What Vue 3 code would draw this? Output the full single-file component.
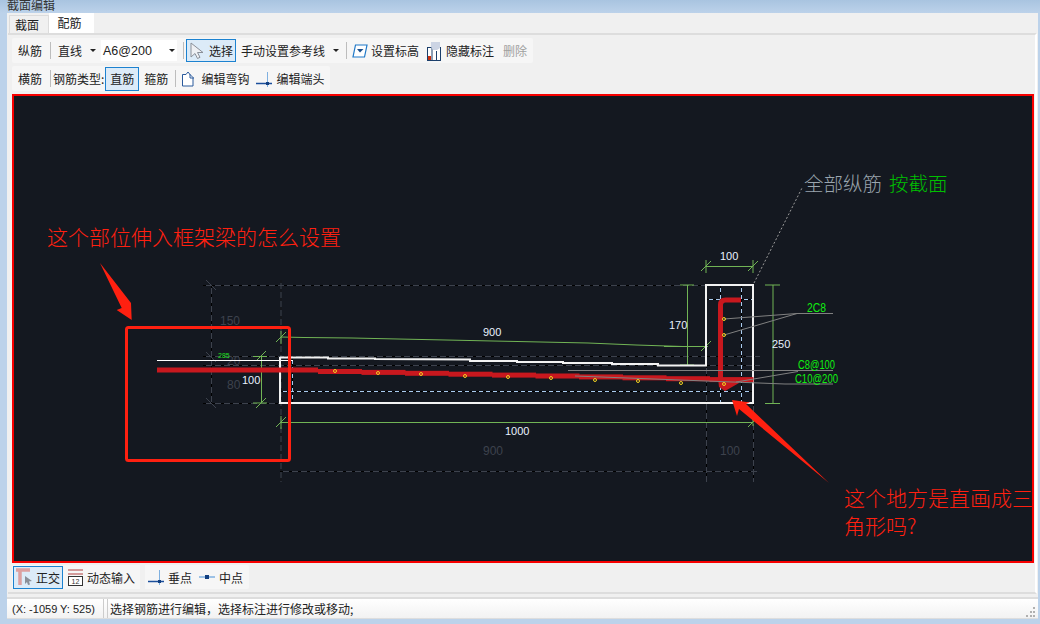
<template>
  <div class="page">
    <div class="title">截面编辑</div>
    <div class="win">
      <div class="tabs">
        <div class="tab">截面</div>
        <div class="tab active">配筋</div>
      </div>

      <div class="panel">
        <!-- first toolbar -->
        <div class="bar">
          <span>纵筋</span>
          <i class="sep ml8"></i>
          <span class="ml7">直线</span>
          <i class="caret ml8"></i>
          <div class="combo ml5"><span>A6@200</span><i class="caret"></i></div>
          <i class="sep ml6"></i>
          <div class="btn ml2 w50">
            <svg width="16" height="18" viewBox="0 0 16 18"><path d="M2 1v14l4-3.500 2.500 5 2.500-1.200-2.500-4.800H14z" fill="#eef0f4" stroke="#8a8f98"/></svg>
            <span class="ml4">选择</span>
          </div>
          <span class="ml5">手动设置参考线</span>
          <i class="caret ml8"></i>
          <i class="sep ml7"></i>
          <svg class="ml5" width="16" height="14" viewBox="0 0 16 14"><path d="M3.500 1H15l-2.500 12H1z" fill="#fff" stroke="#1e78c8" stroke-width="1.200"/><path d="M5 5h6.500L8 8.500z" fill="#1a4f8c"/></svg>
          <span class="ml3">设置标高</span>
          <svg class="ml8" width="14" height="20" viewBox="0 0 14 20"><rect x="0.500" y="6.500" width="13" height="13" fill="#fff" stroke="#1b3f6b"/><path d="M5 7v12M9.500 10v9" stroke="#1b3f6b"/><rect x="1" y="15" width="3" height="4" fill="#c83010"/><path d="M4 1h9v6l-3 2H6L4 6z" fill="#ccd4e4"/></svg>
          <span class="ml5">隐藏标注</span>
          <span class="ml9 off">删除</span>
        </div>

        <!-- second toolbar -->
        <div class="bar">
          <span>横筋</span>
          <i class="sep ml8"></i>
          <span class="ml2">钢筋类型:</span>
          <div class="btn ml1 w34"><span>直筋</span></div>
          <span class="ml5">箍筋</span>
          <i class="sep ml7"></i>
          <svg class="ml5" width="16" height="16" viewBox="0 0 16 16"><path d="M1.500 15V3.500h3.500l2-2.500 2 2.500 3 3V15z" fill="#fff" stroke="#2a5a9c"/><path d="M9 3v4h4" fill="none" stroke="#2a5a9c"/></svg>
          <span class="ml4">编辑弯钩</span>
          <svg class="ml7" width="16" height="16" viewBox="0 0 16 16"><path d="M0 12.500h16" stroke="#1b4f9c" stroke-width="1.500"/><path d="M11.500 1v15" stroke="#7fb0e0"/><rect x="10" y="11" width="3" height="3" fill="#123f80"/></svg>
          <span class="ml4">编辑端头</span>
        </div>

        <!-- drawing -->
        <div class="canvas">
          <svg width="1018" height="465" viewBox="14 96 1018 465">
            <g v-for="(l, i) in dimLines" :key="'d' + i">
              <line :x1="l[0]" :y1="l[1]" :x2="l[2]" :y2="l[3]" stroke="#3d424d" />
              <line :x1="l[0]" :y1="l[1]" :x2="l[2]" :y2="l[3]" stroke="#000" stroke-dasharray="3 6" />
            </g>
            <g v-for="(t, i) in dimTicks" :key="'k' + i">
              <line :x1="t[0] - 5" :y1="t[1] - 5" :x2="t[0] + 5" :y2="t[1] + 5" stroke="#3d424d" />
            </g>
            <text v-for="t in dimTexts" :key="t[0] + '-' + t[1]" :x="t[0]" :y="t[1]" class="dim-text">{{ t[2] }}</text>

            <g v-for="(l, i) in blueLines" :key="'b' + i">
              <line :x1="l[0]" :y1="l[1]" :x2="l[2]" :y2="l[3]" stroke="#a9cbee" />
              <line :x1="l[0]" :y1="l[1]" :x2="l[2]" :y2="l[3]" stroke="#000" stroke-dasharray="3 4" />
            </g>

            <polyline :points="greenTop" fill="none" stroke="#71b455" />
            <g stroke="#71b455" fill="none">
              <path d="M261.500 356.500V403M253 356.500h14M253 403h14" />
              <path d="M281 422.500H753" />
              <path d="M706 266.500H753M706 260v13M753 260v13" />
              <path d="M687.500 285V365M680 285h14M680 365h14M664 346.500h44" />
              <path d="M773 285V403M765 285h15M765 403.500h15" />
              <path d="M281 331v13M706 340v12M281 416v13M753 416v10" />
              <path v-for="(t, i) in greenTicks" :key="'g' + i" :d="`M${t[0] - 5} ${t[1] + 5}L${t[0] + 5} ${t[1] - 5}`" />
            </g>

            <line x1="157" y1="360.500" x2="293" y2="360.500" stroke="#fff" />
            <polyline :points="section" fill="none" stroke="#f2f2f2" stroke-width="2" />

            <!-- rebar -->
            <rect x="157" y="367.500" width="161" height="5" fill="#c8181e" />
            <rect v-for="r in rebarSteps" :key="r.x" :x="r.x" :y="r.y" width="44" height="5" fill="#c8181e" />
            <path d="M720.500 379V305q0-5 5-5H741" fill="none" stroke="#c8181e" stroke-width="5" />
            <path d="M718 378H739V383L725 391 719 387z" fill="#c8181e" />

            <g fill="none" stroke="#808080">
              <path d="M724 319 797 313.500H833M724 335 797 313.500" />
              <path d="M568 370.500H833M736 382 798 371.500" />
              <path d="M575 376 785 384H833" />
            </g>
            <circle v-for="c in dots" :key="c[0] + '_' + c[1]" :cx="c[0]" :cy="c[1]" r="1.500" fill="none" stroke="#f0d020" />

            <text v-for="t in whiteTexts" :key="t[2] + t[0]" :x="t[0]" :y="t[1]" class="num">{{ t[2] }}</text>
            <text x="218" y="358" class="tiny">285</text>
            <text x="807" y="312" class="label" textLength="19" lengthAdjust="spacingAndGlyphs">2C8</text>
            <text x="798" y="369" class="label" textLength="37" lengthAdjust="spacingAndGlyphs">C8@100</text>
            <text x="795" y="383" class="label" textLength="43" lengthAdjust="spacingAndGlyphs">C10@200</text>

            <line x1="754" y1="283" x2="802" y2="188" stroke="#9a9a9a" stroke-dasharray="2 2" />
            <text x="804" y="191" class="note grey">全部纵筋</text>
            <text x="889" y="191" class="note green">按截面</text>

            <!-- hand drawn marks -->
            <rect x="126.500" y="327.500" width="163" height="133" rx="2" fill="none" stroke="#ff2010" stroke-width="3" />
            <path d="M100 263 131 303 131.700 320 116.700 310 121.700 308z" fill="#ff2010" />
            <path d="M732 400 750 402.500 746 404 829 483 739 409 737 416z" fill="#ff2010" />
            <text x="47" y="245" class="ask">这个部位伸入框架梁的怎么设置</text>
            <text x="844" y="506" class="ask">这个地方是直画成三</text>
            <text x="844" y="534" class="ask">角形吗?</text>
          </svg>
        </div>

        <!-- snap toolbar -->
        <div class="bar snap">
          <div class="btn w50 snap-btn">
            <svg width="18" height="18" viewBox="0 0 18 18"><path d="M0 2h14M4 2v15" stroke="#dca0a0" stroke-width="3.500"/><path d="M9 8l7 5-3 .5 1 3-2 .5-1-3-2 2z" fill="#8a8f98"/></svg>
            <span class="ml2">正交</span>
          </div>
          <svg class="ml4" width="17" height="18" viewBox="0 0 17 18"><path d="M1 2h15M1 6h15" stroke="#b04040"/><rect x="1.500" y="8.500" width="14" height="9" fill="#fff" stroke="#333"/><text x="4.500" y="16" class="icon-num">12</text></svg>
          <span class="ml3">动态输入</span>
          <i class="gap"></i>
          <svg class="ml3" width="16" height="16" viewBox="0 0 16 16"><path d="M0 12.500h16" stroke="#1b4f9c" stroke-width="1.500"/><path d="M11.500 1v15" stroke="#7fb0e0"/><rect x="10" y="11" width="3" height="3" fill="#123f80"/></svg>
          <span class="ml4">垂点</span>
          <svg class="ml7" width="16" height="6" viewBox="0 0 16 6"><path d="M0 3h16" stroke="#7fb0e0" stroke-width="1.500"/><rect x="6" y="1" width="4" height="4" fill="#123f80"/></svg>
          <span class="ml4">中点</span>
        </div>
      </div>

      <div class="status">
        <div class="cell coords">(X: -1059 Y: 525)</div>
        <div class="cell msg">选择钢筋进行编辑，选择标注进行修改或移动;</div>
        <svg class="grip" width="10" height="10" viewBox="0 0 10 10" fill="#b0b0b0">
          <rect x="7" y="0" width="2" height="2" /><rect x="4" y="4" width="2" height="2" /><rect x="7" y="4" width="2" height="2" />
          <rect x="0" y="8" width="2" height="2" /><rect x="4" y="8" width="2" height="2" /><rect x="7" y="8" width="2" height="2" />
        </svg>
      </div>
    </div>
  </div>
</template>

<script setup>
// [x1, y1, x2, y2]
const dimLines = [
  [203, 285.5, 706, 285.5],
  [203, 356.5, 760, 356.5],
  [203, 365.5, 760, 365.5],
  [203, 403.5, 280, 403.5],
  [211.5, 285, 211.5, 403],
  [281, 280, 281, 482],
  [706.5, 356, 706.5, 482],
  [753.5, 403, 753.5, 482],
  [280, 471.5, 757, 471.5],
];
const dimTicks = [
  [211, 285],
  [211, 357],
  [211, 403],
];
const dimTexts = [
  [220, 325, "150"],
  [227, 365, "20"],
  [227, 389, "80"],
  [483, 455, "900"],
  [720, 455, "100"],
];
const blueLines = [
  [280, 391.5, 753, 391.5],
  [292.5, 357, 292.5, 403],
  [720.5, 285, 720.5, 403],
  [741.5, 285, 741.5, 403],
  [706, 299.5, 753, 299.5],
];
const greenTop =
  "281,337 304,337.500 352,338 398,339 446,340 493,341 541,342 588,343 636,345 683,346.500 706,346.500";
const greenTicks = [
  [281, 337],
  [261, 356],
  [261, 403],
  [281, 422],
  [706, 266],
  [753, 266],
  [706, 346],
  [753, 422],
];
const section =
  "280,357.500 328,357.500 328,358.500 375,358.500 375,359 470,359.500 470,361 517,361 517,362 563,362 563,363 612,363 612,364 658,364 658,365.500 706,365.500 706,285 753,285 753,403 280,403 280,357";

// the long bar drops a little at every step
const rebarSteps = Array.from({ length: 10 }, (_, i) => ({
  x: 318 + 43.5 * i,
  y: 369 + 0.9 * i,
}));

const dots = [
  [335, 371], [378, 373], [421, 374], [465, 376], [508, 377], [551, 378],
  [595, 380], [638, 381], [681, 383], [724, 384], [724, 319], [724, 335],
];
const whiteTexts = [
  [483, 336, "900"],
  [242, 384, "100"],
  [505, 435, "1000"],
  [720, 260, "100"],
  [669, 329, "170"],
  [772, 348, "250"],
];
</script>

<style scoped>
.page {
  width: 1040px;
  height: 624px;
  overflow: hidden;
  background: #bcd2ea;
  font-family: "Noto Sans CJK SC", "Liberation Sans", sans-serif;
  font-size: 12px;
  color: #222;
}
.title {
  height: 13px;
  line-height: 9px;
  padding-left: 7px;
  overflow: hidden;
  font-size: 12px;
  color: #333;
  background: linear-gradient(#a9c4e0, #bcd2ea);
}
.win {
  width: 1031px;
  margin-left: 7px;
  height: 606px;
  background: #f0f0f0;
}
.tabs {
  display: flex;
  align-items: flex-end;
  height: 20px;
  padding-left: 2px;
}
.tab {
  width: 40px;
  height: 18px;
  line-height: 18px;
  padding-right: 4px;
  text-align: center;
  border: 1px solid #dcdcdc;
  border-bottom: none;
  box-sizing: border-box;
}
.tab.active {
  width: 45px;
  height: 20px;
  background: #fff;
  border-color: #fff;
}
.panel {
  width: 1029px;
  height: 561px;
  margin-left: 1px;
  box-sizing: border-box;
  border-top: 2px solid #ddd;
  border-right: 2px solid #fff;
  border-bottom: 2px solid #ddd;
  padding: 3px 0 0 4px;
  background: #f0f0f0;
}
.bar {
  display: flex;
  align-items: center;
  width: fit-content;
  height: 25px;
  margin-bottom: 3px;
  padding: 0 6px;
  background: #f6f6f6;
  border-radius: 2px;
  white-space: nowrap;
}
.sep {
  display: block;
  width: 1px;
  height: 17px;
  background: #bdbdbd;
}
.caret {
  display: block;
  width: 0;
  height: 0;
  border-left: 3px solid transparent;
  border-right: 3px solid transparent;
  border-top: 3px solid #222;
}
.combo {
  display: flex;
  align-items: center;
  justify-content: space-between;
  width: 76px;
  height: 21px;
  padding: 0 2px;
  box-sizing: border-box;
  background: #fff;
  font-family: "Liberation Sans", sans-serif;
  font-size: 12.500px;
}
.btn {
  display: flex;
  align-items: center;
  justify-content: center;
  height: 23px;
  box-sizing: border-box;
  background: #dcebf8;
  border: 1px solid #1c82d0;
}
.w50 { width: 50px; }
.w34 { width: 34px; height: 24px; }
.off { color: #a0a0a0; }
.ml1 { margin-left: 1px; }
.ml2 { margin-left: 2px; }
.ml3 { margin-left: 3px; }
.ml4 { margin-left: 4px; }
.ml5 { margin-left: 5px; }
.ml6 { margin-left: 6px; }
.ml7 { margin-left: 7px; }
.ml8 { margin-left: 8px; }
.ml9 { margin-left: 9px; }
.canvas {
  width: 1022px;
  height: 469px;
  box-sizing: border-box;
  border: 2px solid #f80000;
  background: #141820;
  overflow: hidden;
}
.canvas svg {
  display: block;
}
.canvas text {
  font-family: "Liberation Sans", sans-serif;
}
.canvas .dim-text {
  font-size: 12px;
  fill: #3d424d;
}
.canvas .num {
  font-size: 11px;
  fill: #e8f2ff;
}
.canvas .tiny {
  font-size: 7px;
  fill: #20e020;
}
.canvas .label {
  font-size: 12px;
  fill: #10f010;
}
.canvas .note {
  font-family: "Noto Sans CJK SC", sans-serif;
  font-size: 19.500px;
  font-weight: 300;
}
.canvas .grey { fill: #9aa5ae; }
.canvas .green { fill: #00c000; }
.canvas .ask {
  font-family: "Noto Sans CJK SC", sans-serif;
  font-size: 21px;
  font-weight: 300;
  fill: #ff2010;
}
.icon-num {
  font-family: "Liberation Sans", sans-serif;
  font-size: 7px;
  fill: #333;
}
.snap {
  margin: 2px 0 0;
  padding: 0 6px 0 1px;
  height: 24px;
}
.gap {
  display: block;
  width: 5px;
  height: 24px;
  margin-left: 5px;
  background: #f0f0f0;
}
.status {
  position: relative;
  display: flex;
  gap: 3px;
  height: 22px;
  margin-top: 3px;
  width: 1031px;
  box-sizing: border-box;
  background: linear-gradient(#fff, #f2f2f2);
  border-top: 2px solid #ddd;
  border-bottom: 1px solid #ddd;
}
.cell {
  line-height: 20px;
  padding-left: 5px;
  background: linear-gradient(#fff, #f2f2f2);
}
.coords {
  width: 97px;
  box-sizing: border-box;
  border-right: 1px solid #ccc;
  font-family: "Liberation Sans", sans-serif;
  font-size: 11px;
}
.msg {
  padding-left: 2px;
  border-left: 1px solid #ccc;
}
.grip {
  position: absolute;
  right: 2px;
  bottom: 1px;
}
</style>
